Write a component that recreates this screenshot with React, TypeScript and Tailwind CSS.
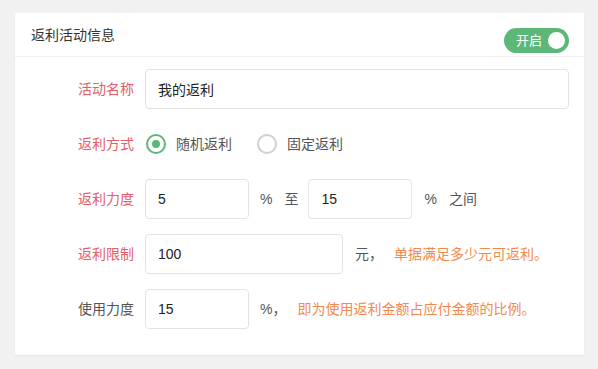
import React, { useState } from "react";

const font = { fontFamily: '"Liberation Sans", "Noto Sans CJK SC", sans-serif' };

function Label({ text, red = true }: { text: string; red?: boolean }) {
  return (
    <div className={`w-[119px] mr-[11px] text-right text-[14px] shrink-0 ${red ? "text-[#e35d6a]" : "text-[#555]"}`}>
      {text}
    </div>
  );
}

function Input({ value, w }: { value: string; w: string }) {
  return (
    <input
      className={`${w} h-10 rounded-[4px] border border-[#e3e3e3] px-3 text-[14px] text-[#222] outline-none`}
      defaultValue={value}
    />
  );
}

function Radio({ checked, label, onClick }: { checked: boolean; label: string; onClick: () => void }) {
  return (
    <button type="button" onClick={onClick} className="flex items-center gap-[10px]">
      <span
        className={`flex h-5 w-5 items-center justify-center rounded-full border-2 ${checked ? "border-[#5cb878]" : "border-[#cfcfcf]"}`}
      >
        {checked ? <span className="h-2 w-2 rounded-full bg-[#5cb878]" /> : null}
      </span>
      <span className="text-[14px] text-[#555]">{label}</span>
    </button>
  );
}

export default function App() {
  const [mode, setMode] = useState<"random" | "fixed">("random");
  const [on, setOn] = useState(true);

  return (
    <div className="min-h-[369px] w-[598px] bg-[#f1f1f1] pt-[13px] pl-[15px]" style={font}>
      <div className="w-[569px] h-[342px] bg-white rounded-[2px] shadow-[0_1px_2px_rgba(0,0,0,0.05)]">
        {/* ===== Header ===== */}
        <div className="flex h-[44px] items-center justify-between border-b border-[#f0f0f0] pl-4 pr-[15px]">
          <h2 className="mt-[2px] text-[14px] text-[#333]">返利活动信息</h2>
          <button
            type="button"
            onClick={() => setOn(v => !v)}
            className="self-end mb-[3px] flex h-[25px] w-[65px] items-center justify-between rounded-full bg-[#5cb878] pl-3 pr-1"
          >
            <span className="text-[13px] text-white">{on ? "开启" : "关闭"}</span>
            <span className="h-[17px] w-[17px] rounded-full bg-white" />
          </button>
        </div>

        {/* ===== Form ===== */}
        <div className="flex flex-col gap-[15px] pt-3">
          <div className="flex h-10 items-center">
            <Label text="活动名称" />
            <Input value="我的返利" w="w-[424px]" />
          </div>

          <div className="flex h-10 items-center">
            <Label text="返利方式" />
            <div className="flex items-center gap-[25px] pl-px">
              <Radio checked={mode === "random"} label="随机返利" onClick={() => setMode("random")} />
              <Radio checked={mode === "fixed"} label="固定返利" onClick={() => setMode("fixed")} />
            </div>
          </div>

          <div className="flex h-10 items-center text-[14px] text-[#555]">
            <Label text="返利力度" />
            <Input value="5" w="w-[104px]" />
            <span className="ml-[11px]">%</span>
            <span className="ml-[12px] mr-[10px]">至</span>
            <Input value="15" w="w-[104px]" />
            <span className="ml-[12px]">%</span>
            <span className="ml-[12px]">之间</span>
          </div>

          <div className="flex h-10 items-center text-[14px] text-[#555]">
            <Label text="返利限制" />
            <Input value="100" w="w-[198px]" />
            <span className="ml-[12px]">元，</span>
            <span className="ml-[11px] text-[#f5894d]">单据满足多少元可返利。</span>
          </div>

          <div className="flex h-10 items-center text-[14px] text-[#555]">
            <Label text="使用力度" red={false} />
            <Input value="15" w="w-[104px]" />
            <span className="ml-[11px]">%，</span>
            <span className="ml-[11px] text-[#f5894d]">即为使用返利金额占应付金额的比例。</span>
          </div>
        </div>
      </div>
    </div>
  );
}
